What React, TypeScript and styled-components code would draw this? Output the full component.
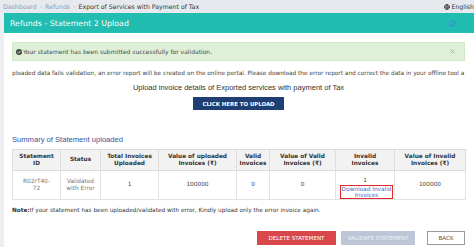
import React from "react"
import styled, { createGlobalStyle } from "styled-components"
import { Globe, RefreshCw, X } from "lucide-react"

const GlobalStyle = createGlobalStyle`
  html, body {
    margin: 0;
    padding: 0;
    background: #eceef1;
    font-family: "DejaVu Sans", Verdana, sans-serif;
    color: #333;
  }
`

type Column = { title: string[]; width: number }

const columns: Column[] = [
  { title: ["Statement", "ID"], width: 48 },
  { title: ["Status"], width: 40 },
  { title: ["Total Invoices", "Uploaded"], width: 58 },
  { title: ["Value of uploaded", "Invoices (₹)"], width: 78 },
  { title: ["Valid", "Invoices"], width: 33 },
  { title: ["Value of Valid", "Invoices (₹)"], width: 66 },
  { title: ["Invalid", "Invoices"], width: 59 },
  { title: ["Value of Invalid", "Invoices (₹)"], width: 71 },
]

const CheckCircle = () => (
  <svg width="6" height="6" viewBox="0 0 12 12" style={{ marginRight: 1, verticalAlign: -0.5 }}>
    <circle cx="6" cy="6" r="6" fill="#3d4a3d" />
    <path d="M3.2 6.2 L5.2 8.1 L8.9 4" stroke="#fff" strokeWidth="1.8" fill="none" />
  </svg>
)

const App: React.FC = () => {
  return (
    <S.Page>
      <GlobalStyle />
      <S.Breadcrumb>
        <S.Crumbs>
          <S.CrumbLink>Dashboard</S.CrumbLink>
          <S.Sep>›</S.Sep>
          <S.CrumbLink>Refunds</S.CrumbLink>
          <S.Sep>›</S.Sep>
          <S.CrumbCurrent>Export of Services with Payment of Tax</S.CrumbCurrent>
        </S.Crumbs>
        <S.Lang>
          <Globe size={6} strokeWidth={3} color="#333" />
          English
        </S.Lang>
      </S.Breadcrumb>
      <S.Panel>
        <S.Header>
          <S.Title>Refunds - Statement 2 Upload</S.Title>
          <RefreshCw size={7} strokeWidth={3.5} color="#3f8fcf" />
        </S.Header>
        <S.Body>
          <S.Alert>
            <span>
              <CheckCircle />
              Your statement has been submitted successfully for validation.
            </span>
            <X size={7} strokeWidth={2.5} color="#a0a8a0" />
          </S.Alert>
          <S.InfoLine>
            ploaded data fails validation, an error report will be created on the online portal. Please download the error report and correct the data in your offline tool a
          </S.InfoLine>
          <S.UploadHeading>Upload invoice details of Exported services with payment of Tax</S.UploadHeading>
          <S.UploadRow>
            <S.UploadButton>CLICK HERE TO UPLOAD</S.UploadButton>
          </S.UploadRow>
          <S.SummaryHeading>Summary of Statement uploaded</S.SummaryHeading>
          <S.Table>
            <colgroup>
              {columns.map((c, i) => (
                <col key={i} style={{ width: c.width }} />
              ))}
            </colgroup>
            <thead>
              <tr>
                {columns.map((c, i) => (
                  <S.Th key={i}>
                    {c.title.map((line, j) => (
                      <div key={j}>{line}</div>
                    ))}
                  </S.Th>
                ))}
              </tr>
            </thead>
            <tbody>
              <tr>
                <S.Td $muted>
                  R02rT40-
                  <br />
                  72
                </S.Td>
                <S.Td $muted>
                  Validated
                  <br />
                  with Error
                </S.Td>
                <S.Td>1</S.Td>
                <S.Td>100000</S.Td>
                <S.Td>0</S.Td>
                <S.Td>0</S.Td>
                <S.InvalidCell>
                  <div>1</div>
                  <S.DownloadBox>
                    <S.DownloadLink>
                      Download Invalid
                      <br />
                      Invoices
                    </S.DownloadLink>
                  </S.DownloadBox>
                </S.InvalidCell>
                <S.Td>100000</S.Td>
              </tr>
            </tbody>
          </S.Table>
          <S.Note>
            <b>Note:</b>If your statement has been uploaded/validated with error, Kindly upload only the error invoice again.
          </S.Note>
          <S.Actions>
            <S.ActionButton $variant="danger">DELETE STATEMENT</S.ActionButton>
            <S.ActionButton $variant="disabled">VALIDATE STATEMENT</S.ActionButton>
            <S.ActionButton $variant="outline">BACK</S.ActionButton>
          </S.Actions>
        </S.Body>
      </S.Panel>
    </S.Page>
  )
}

type Variant = "danger" | "disabled" | "outline"

const variantStyles: Record<Variant, string> = {
  danger: "background: #d9474a; color: #fff; border: 1px solid #d9474a; width: 79px;",
  disabled: "background: #bcc6d7; color: #eef1f6; border: 1px solid #bcc6d7; width: 74px;",
  outline: "background: #fff; color: #555; border: 1px solid #9a9a9a; width: 38px; margin-left: 7px;",
}

const S = {
  Page: styled.div`
    width: 474px;
    height: 247px;
    overflow: hidden;
  `,
  Breadcrumb: styled.div`
    height: 13px;
    display: flex;
    justify-content: space-between;
    align-items: center;
    padding: 0 0 0 3px;
    background: #e6e9ed;
    font-size: 6.2px;
  `,
  Crumbs: styled.div`
    display: flex;
    align-items: center;
    gap: 3px;
  `,
  CrumbLink: styled.span`
    color: #8fa0b6;
  `,
  Sep: styled.span`
    color: #c0c6ce;
  `,
  CrumbCurrent: styled.span`
    color: #333;
  `,
  Lang: styled.div`
    display: flex;
    align-items: center;
    gap: 1.5px;
    color: #333;
    width: 30px;
    white-space: nowrap;
  `,
  Panel: styled.div`
    margin-left: 4px;
    background: #fff;
    height: 234px;
  `,
  Header: styled.div`
    height: 20px;
    display: flex;
    justify-content: space-between;
    align-items: center;
    padding: 0 18px 0 6px;
    background: #21bdb0;
  `,
  Title: styled.span`
    color: #fff;
    font-size: 7.8px;
    letter-spacing: 0.05px;
  `,
  Body: styled.div`
    padding: 9px 9px 0 8px;
  `,
  Alert: styled.div`
    height: 19px;
    box-sizing: border-box;
    display: flex;
    justify-content: space-between;
    align-items: center;
    padding: 0 8px 0 3px;
    background: #dff0d8;
    border: 1px solid #d3e8c9;
    color: #4a4a4a;
    font-size: 6px;
  `,
  InfoLine: styled.div`
    margin-top: 8px;
    height: 8px;
    line-height: 8px;
    white-space: nowrap;
    overflow: hidden;
    font-size: 5.8px;
    color: #444;
  `,
  UploadHeading: styled.div`
    margin-top: 6px;
    text-align: center;
    font-family: "Liberation Sans", Arial, sans-serif;
    font-size: 7.5px;
    line-height: 10px;
    color: #333;
  `,
  UploadRow: styled.div`
    display: flex;
    justify-content: center;
    margin-top: 4px;
  `,
  UploadButton: styled.button`
    width: 91px;
    height: 13px;
    padding: 0;
    border: none;
    background: #1f3e74;
    color: #fff;
    font-family: "DejaVu Sans", Verdana, sans-serif;
    font-weight: bold;
    font-size: 5.4px;
  `,
  SummaryHeading: styled.div`
    margin-top: 25px;
    font-family: "Liberation Sans", Arial, sans-serif;
    font-size: 7.6px;
    line-height: 10px;
    color: #34549a;
  `,
  Table: styled.table`
    margin-top: 4px;
    width: 453px;
    table-layout: fixed;
    border-collapse: collapse;
    font-size: 5.8px;
  `,
  Th: styled.th`
    height: 20px;
    padding: 0;
    background: #f2f2f2;
    border: 1px solid #dcdcdc;
    font-weight: bold;
    line-height: 7.5px;
    color: #333;
    text-align: center;
  `,
  Td: styled.td<{ $muted?: boolean }>`
    height: 28px;
    padding: 0;
    border: 1px solid #e2e2e2;
    text-align: center;
    line-height: 7.5px;
    color: ${(p) => (p.$muted ? "#777" : "#444")};
  `,
  InvalidCell: styled.td`
    height: 28px;
    padding: 0;
    border: 1px solid #e2e2e2;
    text-align: center;
    vertical-align: bottom;
    line-height: 7px;
    color: #444;
  `,
  DownloadBox: styled.div`
    margin: 1px 1px 0 4px;
    border: 1.5px solid #e0262b;
    height: 14px;
    box-sizing: border-box;
    display: flex;
    align-items: center;
    justify-content: center;
  `,
  DownloadLink: styled.span`
    color: #3d72c6;
    line-height: 6px;
  `,
  Note: styled.div`
    margin-top: 6px;
    font-size: 5.75px;
    color: #333;
    line-height: 8px;
  `,
  Actions: styled.div`
    display: flex;
    justify-content: flex-end;
    gap: 5px;
    margin-top: 17px;
  `,
  ActionButton: styled.button<{ $variant: Variant }>`
    height: 14px;
    padding: 0;
    box-sizing: border-box;
    font-family: "DejaVu Sans", Verdana, sans-serif;
    font-size: 5.6px;
    ${(p) => variantStyles[p.$variant]}
  `,
}

export default App
